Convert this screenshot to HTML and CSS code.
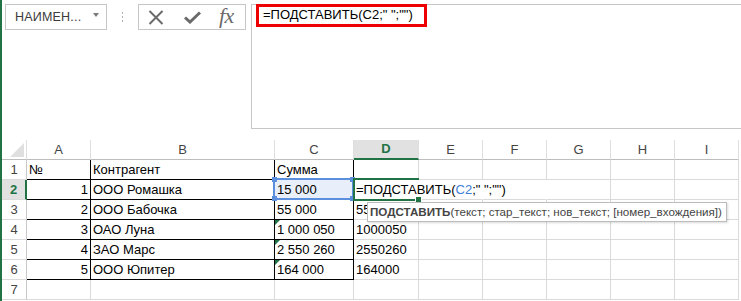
FILE: index.html
```html
<!DOCTYPE html>
<html lang="ru">
<head>
<meta charset="utf-8">
<title>ПОДСТАВИТЬ</title>
<link rel="stylesheet" href="styles.css">
</head>
<body>
<div class="app">
  <div class="bar">
    <div class="namebox"><span class="nametext">НАИМЕН...</span><span class="caret"></span></div>
    <div class="grip"><i></i><i></i><i></i></div>
    <div class="fxbox">
      <svg class="ico-x" width="16" height="15" viewBox="0 0 16 15"><path d="M1.5 1 L14.5 14 M14.5 1 L1.5 14" stroke="#6a6a6a" stroke-width="2" fill="none"/></svg>
      <svg class="ico-ok" width="17" height="13" viewBox="0 0 17 13"><path d="M1 6.5 L6 11 L16 1.5" stroke="#6a6a6a" stroke-width="3" fill="none"/></svg>
      <span class="fx">fx</span>
    </div>
    <div class="formula"><div class="hl">=ПОДСТАВИТЬ(С2;" ";"")</div></div>
  </div>

  <div class="sheet">
    <div class="row head">
      <div class="rh corner"><span class="tri"></span></div>
      <div class="h ca">A</div><div class="h cb">B</div><div class="h cc">C</div><div class="h cd act">D</div><div class="h ce">E</div><div class="h cf">F</div><div class="h cg">G</div><div class="h chh">H</div><div class="h ci">I</div>
    </div>
    <div class="row">
      <div class="rh">1</div>
      <div class="c ca tb">№</div><div class="c cb tb">Контрагент</div><div class="c cc tb">Сумма</div><div class="c cd"></div><div class="c ce"></div><div class="c cf"></div><div class="c cg"></div><div class="c chh"></div><div class="c ci"></div>
    </div>
    <div class="row">
      <div class="rh act">2</div>
      <div class="c ca tb num">1</div><div class="c cb tb">ООО Ромашка</div><div class="c cc tb sel">15 000</div><div class="c cd over">=ПОДСТАВИТЬ(<span class="ref">C2</span>;" ";"")</div><div class="c ce nor"></div><div class="c cf nor"></div><div class="c cg"></div><div class="c chh"></div><div class="c ci"></div>
    </div>
    <div class="row">
      <div class="rh">3</div>
      <div class="c ca tb num">2</div><div class="c cb tb">ООО Бабочка</div><div class="c cc tb">55 000</div><div class="c cd clip">55000</div><div class="c ce"></div><div class="c cf"></div><div class="c cg"></div><div class="c chh"></div><div class="c ci"></div>
    </div>
    <div class="row">
      <div class="rh">4</div>
      <div class="c ca tb num">3</div><div class="c cb tb">ОАО Луна</div><div class="c cc tb warn">1 000 050</div><div class="c cd">1000050</div><div class="c ce"></div><div class="c cf"></div><div class="c cg"></div><div class="c chh"></div><div class="c ci"></div>
    </div>
    <div class="row">
      <div class="rh">5</div>
      <div class="c ca tb num">4</div><div class="c cb tb">ЗАО Марс</div><div class="c cc tb warn">2 550 260</div><div class="c cd">2550260</div><div class="c ce"></div><div class="c cf"></div><div class="c cg"></div><div class="c chh"></div><div class="c ci"></div>
    </div>
    <div class="row">
      <div class="rh">6</div>
      <div class="c ca tb num">5</div><div class="c cb tb">ООО Юпитер</div><div class="c cc tb warn">164 000</div><div class="c cd">164000</div><div class="c ce"></div><div class="c cf"></div><div class="c cg"></div><div class="c chh"></div><div class="c ci"></div>
    </div>
    <div class="row">
      <div class="rh">7</div>
      <div class="c ca"></div><div class="c cb"></div><div class="c cc"></div><div class="c cd"></div><div class="c ce"></div><div class="c cf"></div><div class="c cg"></div><div class="c chh"></div><div class="c ci"></div>
    </div>

    <div class="refbox"><i class="k k1"></i><i class="k k2"></i><i class="k k3"></i><i class="k k4"></i></div>
    <div class="active"><i class="handle"></i></div>
    <div class="tip"><b>ПОДСТАВИТЬ</b>(текст; стар_текст; нов_текст; [номер_вхождения])</div>
  </div>
</div>
</body>
</html>
```

FILE: styles.css
```css
html, body {
  margin: 0;
  padding: 0;
  background: #fff;
}
.app {
  border-left: 2px solid #217346;
  height: 301px;
  overflow: hidden;
  font-family: "Liberation Sans", Arial, sans-serif;
  color: #000;
}

/* top bar */
.bar {
  display: flex;
  align-items: flex-start;
  padding-top: 4px;
  height: 125px;
}
.namebox {
  margin-left: 3px;
  width: 102px;
  height: 26px;
  box-sizing: border-box;
  border: 1px solid #c6c6c6;
  display: flex;
  align-items: center;
  justify-content: space-between;
  padding: 0 7px 1px 9px;
}
.nametext {
  font-size: 12.5px;
  color: #3b3b3b;
  letter-spacing: 0.2px;
}
.caret {
  width: 0;
  height: 0;
  border-left: 3.5px solid transparent;
  border-right: 3.5px solid transparent;
  border-top: 4px solid #7a7a7a;
  margin-bottom: 3px;
}
.grip {
  width: 31px;
  height: 26px;
  display: flex;
  flex-direction: column;
  align-items: center;
  justify-content: center;
  gap: 2px;
}
.grip i {
  display: block;
  width: 1px;
  height: 2px;
  background: #b0b0b0;
}
.fxbox {
  width: 108px;
  height: 26px;
  box-sizing: border-box;
  border: 1px solid #c6c6c6;
  display: flex;
  align-items: center;
  padding-left: 9px;
}
.ico-x { margin-top: 1px; }
.ico-ok { margin-left: 20px; margin-top: 1px; }
.fx {
  margin-left: 18px;
  font-family: "Liberation Serif", "Times New Roman", serif;
  font-style: italic;
  font-size: 22px;
  color: #6a6a6a;
  letter-spacing: -0.5px;
  line-height: 1;
  margin-top: -2px;
}
.formula {
  flex: 1;
  margin-left: 5px;
  height: 125px;
  box-sizing: border-box;
  border: 1px solid #c6c6c6;
  border-right: none;
}
.hl {
  margin: -1px 0 0 4px;
  width: 171px;
  height: 23px;
  box-sizing: border-box;
  border: 3px solid #ee0000;
  font-size: 13px;
  line-height: 16px;
  padding-left: 4px;
  white-space: nowrap;
}

/* sheet */
.sheet {
  position: relative;
  margin-top: 11px;
  font-size: 13px;
}
.row {
  display: flex;
  height: 20px;
}
.row > div {
  box-sizing: border-box;
  height: 20px;
  border-right: 1px solid #dadada;
  border-bottom: 1px solid #dadada;
  line-height: 19px;
  white-space: nowrap;
}
.rh {
  width: 25px;
  flex: none;
  text-align: center;
  color: #444;
  border-right-color: #c8c8c8 !important;
}
.head > div {
  border-bottom-color: #bdbdbd !important;
  border-right-color: #dedede;
  text-align: center;
  color: #444;
}
.corner {
  position: relative;
  border-right-color: #dedede !important;
}
.tri {
  position: absolute;
  right: 2px;
  bottom: 2px;
  width: 0;
  height: 0;
  border-left: 14px solid transparent;
  border-bottom: 14px solid #dfdfdf;
}
.ca { width: 64px; flex: none; }
.cb { width: 184px; flex: none; }
.cc { width: 79px; flex: none; }
.cd { width: 65px; flex: none; }
.ce, .cf, .cg, .chh, .ci { width: 64px; flex: none; }
.c {
  padding: 0 2px;
  position: relative;
}
.clip { overflow: hidden; }
.num { text-align: right; }
.tb {
  border-right-color: #000 !important;
  border-bottom-color: #000 !important;
}
.h.act {
  background: #e1e1e1;
  color: #217346;
  font-weight: bold;
  border-bottom: 2px solid #217346 !important;
  line-height: 18px;
}
.rh.act {
  background: #e1e1e1;
  color: #217346;
  font-weight: bold;
  border-right: 2px solid #217346 !important;
}
.sel { background: #e9effa; }
.over {
  overflow: visible;
  border-right-color: transparent !important;
  z-index: 1;
}
.nor { border-right-color: transparent !important; }
.ref { color: #3d7ed6; }
.warn::before {
  content: "";
  position: absolute;
  left: 0;
  top: 0;
  width: 0;
  height: 0;
  border-top: 5px solid #217346;
  border-right: 5px solid transparent;
}

/* overlays */
.refbox {
  position: absolute;
  left: 271px;
  top: 38px;
  width: 81px;
  height: 22px;
  box-sizing: border-box;
  border: 2px solid #5b8fde;
  z-index: 2;
}
.k {
  position: absolute;
  width: 5px;
  height: 5px;
  background: #5b8fde;
}
.k1 { left: -3px; top: -3px; }
.k2 { right: -3px; top: -3px; }
.k3 { left: -3px; bottom: -3px; }
.k4 { right: -3px; bottom: -3px; }
.active {
  position: absolute;
  left: 351px;
  top: 38px;
  width: 66px;
  height: 23px;
  box-sizing: border-box;
  border-top: 2px solid #217346;
  border-left: 2px solid #217346;
  border-bottom: 2px solid #217346;
  z-index: 3;
}
.handle {
  position: absolute;
  right: -3px;
  bottom: -4px;
  width: 5px;
  height: 5px;
  background: #217346;
  border: 1px solid #fff;
}
.tip {
  position: absolute;
  left: 365px;
  top: 62px;
  width: 360px;
  height: 20px;
  box-sizing: border-box;
  border: 1px solid #bcbcbc;
  background: #fff;
  box-shadow: 1px 1px 2px rgba(0, 0, 0, 0.15);
  font-size: 11.6px;
  line-height: 18px;
  color: #444;
  padding-left: 2px;
  white-space: nowrap;
  z-index: 4;
}
.tip b { color: #444; }
```
